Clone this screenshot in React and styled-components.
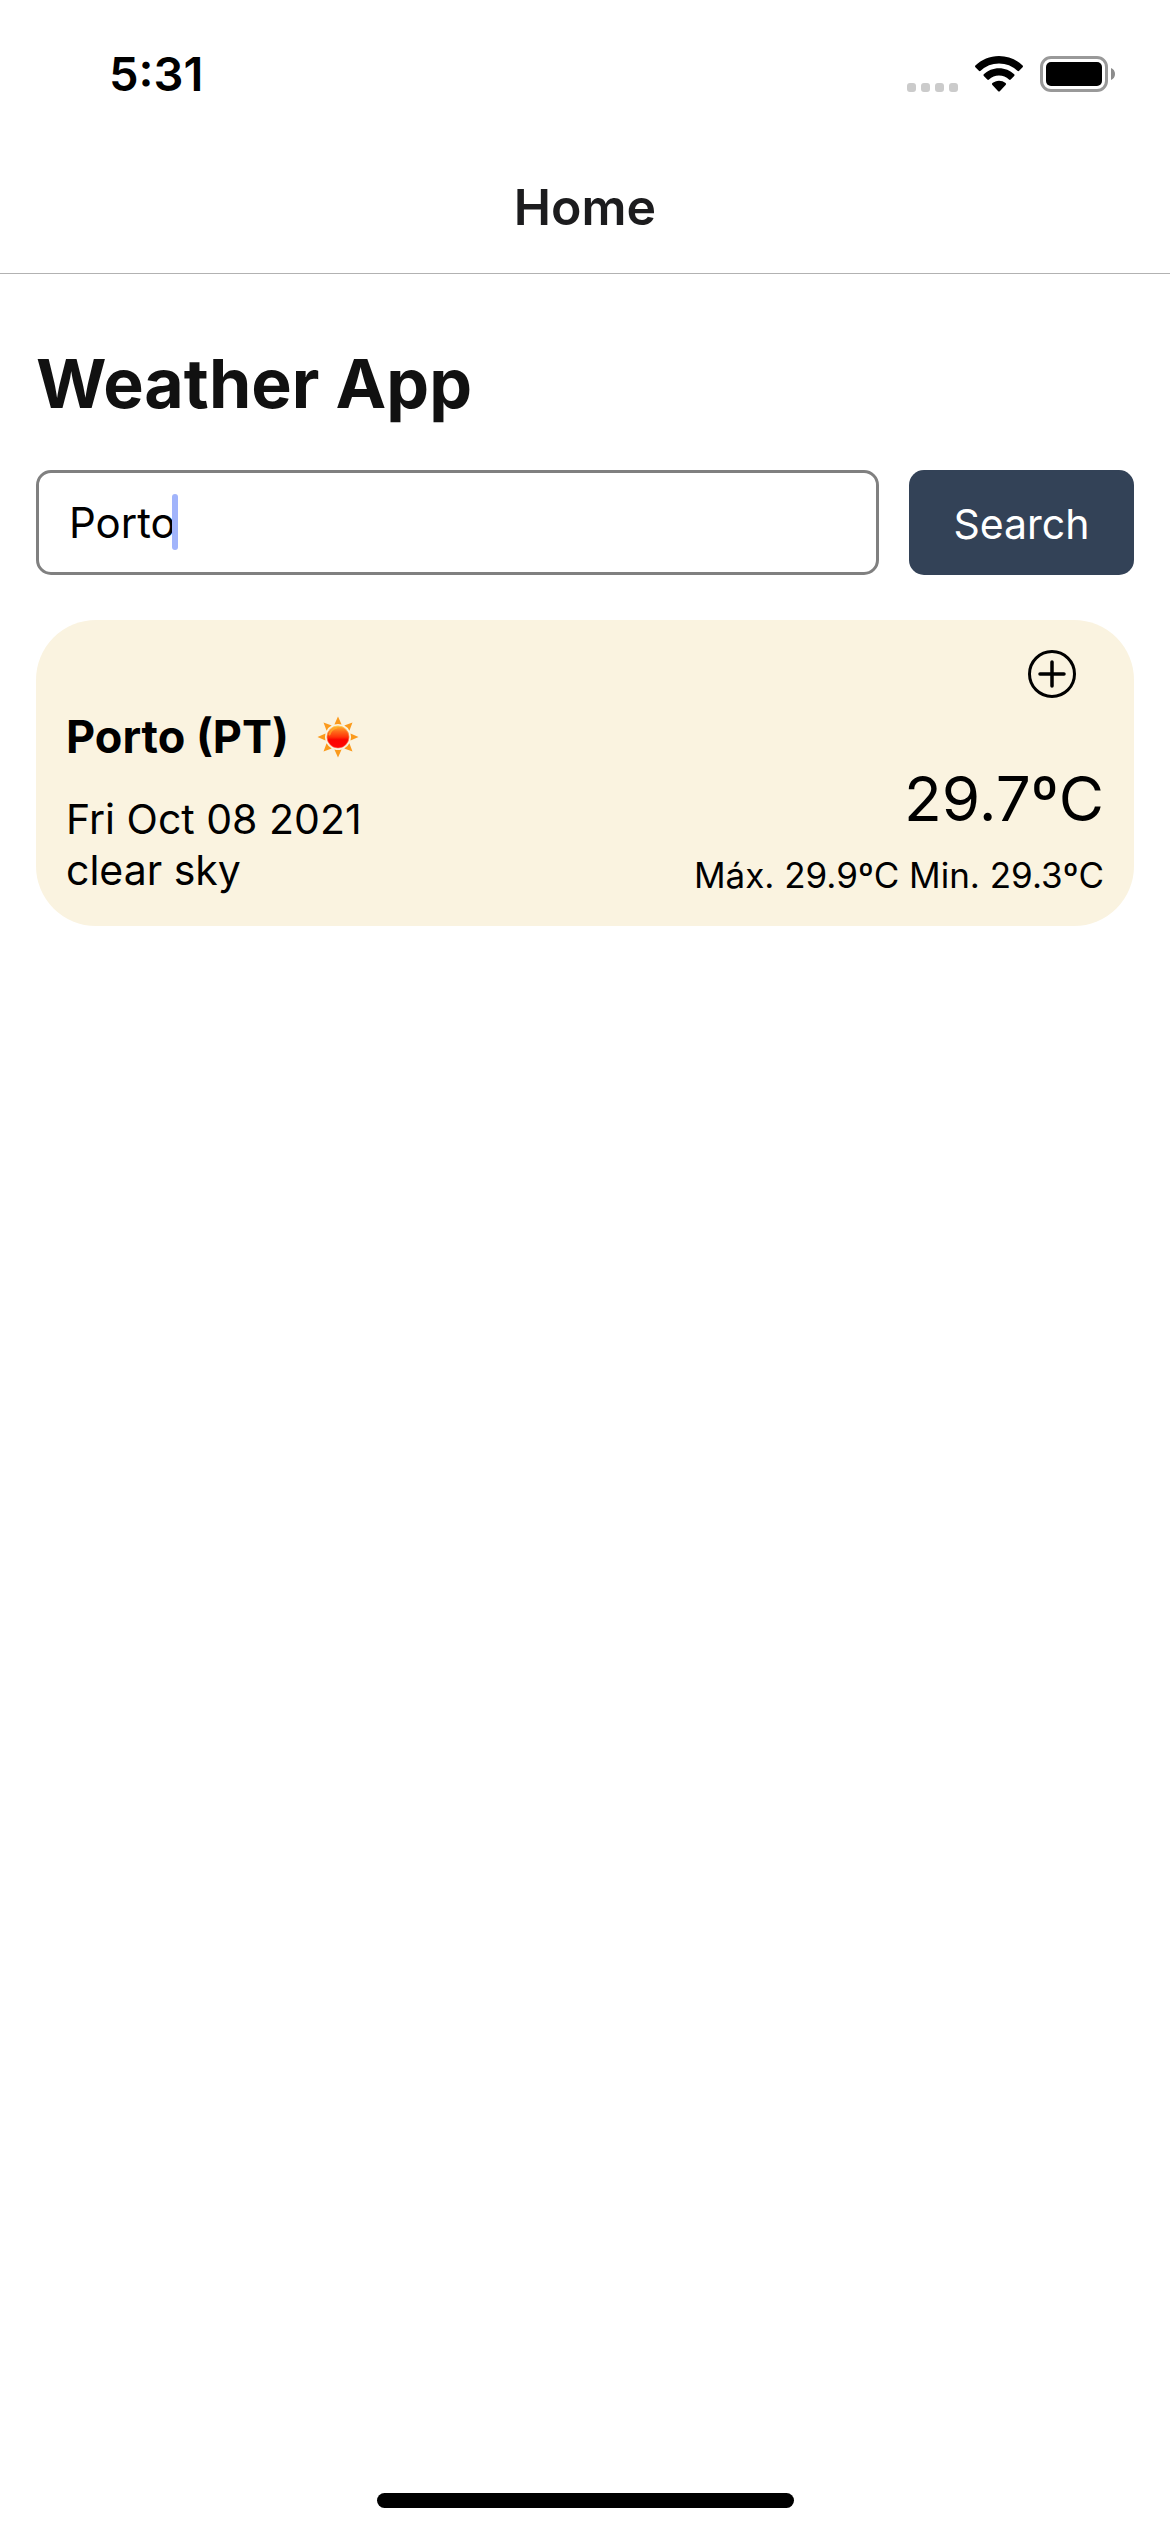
import React, { useState } from "react";
import styled, { createGlobalStyle } from "styled-components";

const GlobalStyle = createGlobalStyle`
  *, *::before, *::after { box-sizing: border-box; }
  body {
    margin: 0;
    background: #fff;
    color: #000;
    font-family: Inter, "Liberation Sans", sans-serif;
  }
`;

const Screen = styled.div`
  display: flex;
  flex-direction: column;
  min-height: 100vh;
`;

const StatusBar = styled.div`
  display: flex;
  align-items: center;
  justify-content: space-between;
  height: 141px;
  padding: 7px 54px 0 109px;
`;

const Time = styled.time`
  font-size: 47px;
  font-weight: 600;
  line-height: 54px;
`;

const StatusIcons = styled.div`
  display: flex;
  align-items: flex-end;
  gap: 17px;
  height: 36px;

  svg { display: block; }
`;

const SignalDots = styled.div`
  display: flex;
  gap: 5px;
`;

const Dot = styled.span`
  width: 9px;
  height: 9px;
  border-radius: 3px;
  background: #cbcbcb;
`;

const NavBar = styled.header`
  display: flex;
  align-items: center;
  justify-content: center;
  height: 133px;
  border-bottom: 1px solid #b2b2b2;
`;

const NavTitle = styled.div`
  color: #1c1c1e;
  font-size: 50px;
  font-weight: 600;
  line-height: 60px;
`;

const Content = styled.main`
  display: flex;
  flex: 1;
  flex-direction: column;
  padding: 66px 36px;
`;

const Title = styled.h1`
  margin: 0 0 44px;
  color: #111;
  font-size: 68px;
  font-weight: 700;
  line-height: 86px;
`;

const SearchForm = styled.form`
  display: flex;
  gap: 30px;
  margin-bottom: 45px;
`;

const Field = styled.div`
  position: relative;
  flex: 1;
`;

const CityInput = styled.input`
  display: block;
  width: 100%;
  height: 105px;
  padding: 0 30px;
  border: 3px solid #808080;
  border-radius: 15px;
  outline: none;
  background: #fff;
  color: #000;
  font: 400 42px/51px Inter, "Liberation Sans", sans-serif;
  caret-color: transparent;
`;

const Caret = styled.span`
  position: absolute;
  top: 24px;
  left: 136px;
  width: 6px;
  height: 56px;
  border-radius: 3px;
  background: #a1b4fb;
`;

const SearchButton = styled.button`
  width: 225px;
  height: 105px;
  padding: 4px 0 0;
  border: 0;
  border-radius: 15px;
  background: #334257;
  color: #fff;
  font: 400 41px/51px Inter, "Liberation Sans", sans-serif;
`;

const Card = styled.article`
  padding: 30px;
  border-radius: 60px;
  background: #faf3e0;
`;

const CardActions = styled.div`
  display: flex;
  justify-content: flex-end;
  padding-right: 28px;
  margin-bottom: 12px;
`;

const IconButton = styled.button`
  padding: 0;
  border: 0;
  background: none;
  color: #000;

  svg { display: block; }
`;

const CardBody = styled.div`
  display: flex;
  align-items: flex-end;
  justify-content: space-between;
`;

const CityRow = styled.div`
  display: flex;
  align-items: center;
  gap: 28px;
  margin-bottom: 30px;
`;

const City = styled.h2`
  margin: 0;
  font-size: 45px;
  font-weight: 700;
  line-height: 54px;
`;

const Detail = styled.p`
  margin: 0;
  font-size: 41px;
  line-height: 51px;
`;

const Readings = styled.div`
  text-align: right;
`;

const Temperature = styled.p`
  margin: 0 0 16px;
  font-size: 62px;
  line-height: 78px;
`;

const Range = styled.p`
  margin: 0;
  font-size: 35px;
  line-height: 42px;
`;

const Footer = styled.footer`
  display: flex;
  justify-content: center;
  padding-bottom: 24px;
`;

const HomeIndicator = styled.div`
  width: 417px;
  height: 15px;
  border-radius: 8px;
  background: #000;
`;

function WifiIcon() {
  return (
    <svg width="48" height="36" viewBox="0 0 48 36" aria-hidden="true">
      <path d="M24 0C14.8 0 6.500 3.600 .4 9.500a1.200 1.200 0 0 0 0 1.700l3.500 3.600a1.200 1.200 0 0 0 1.700 0A26.500 26.500 0 0 1 24 7.400a26.500 26.500 0 0 1 18.400 7.400 1.200 1.200 0 0 0 1.700 0l3.500-3.600a1.200 1.200 0 0 0 0-1.700C41.500 3.600 33.200 0 24 0Z" />
      <path d="M24 12.300c-5.900 0-11.200 2.300-15.200 6a1.200 1.200 0 0 0 0 1.700l3.500 3.600a1.200 1.200 0 0 0 1.700 0 14.500 14.500 0 0 1 20 0 1.200 1.200 0 0 0 1.700 0l3.500-3.600a1.200 1.200 0 0 0 0-1.700c-4-3.700-9.300-6-15.200-6Z" />
      <path d="M24 24.700c-2.500 0-4.800.9-6.600 2.400a1.200 1.200 0 0 0 0 1.800l5.800 6.300a1.200 1.200 0 0 0 1.600 0l5.800-6.300a1.200 1.200 0 0 0 0-1.800 10.300 10.300 0 0 0-6.600-2.400Z" />
    </svg>
  );
}

function BatteryIcon() {
  return (
    <svg width="76" height="36" viewBox="0 0 76 36" aria-hidden="true">
      <rect x="1.500" y="1.500" width="65" height="33" rx="9.500" fill="none" stroke="#999" strokeWidth="3" />
      <rect x="6" y="6" width="56" height="24" rx="5" />
      <path d="M71 12c2.500 1 4 3.200 4 6s-1.500 5-4 6Z" fill="#8c8c8c" />
    </svg>
  );
}

function AddIcon() {
  return (
    <svg width="48" height="48" viewBox="0 0 48 48" fill="none" stroke="currentColor" strokeWidth="3" strokeLinecap="round" aria-hidden="true">
      <circle cx="24" cy="24" r="22.500" />
      <path d="M24 12v24M12 24h24" strokeWidth="3.500" />
    </svg>
  );
}

function SunIcon() {
  const rays = [0, 45, 90, 135, 180, 225, 270, 315];
  return (
    <svg width="42" height="42" viewBox="0 0 42 42" role="img" aria-label="Sunny">
      <defs>
        <linearGradient id="sunFill" x1="0" y1="0" x2="0" y2="1">
          <stop offset="0" stopColor="#ffb52e" />
          <stop offset=".25" stopColor="#ff6a1a" />
          <stop offset=".5" stopColor="#ff3308" />
          <stop offset=".62" stopColor="#fb0500" />
          <stop offset="1" stopColor="#ff0505" />
        </linearGradient>
        <linearGradient id="sunRim" x1="0" y1="0" x2="0" y2="1">
          <stop offset="0" stopColor="#ffcb55" />
          <stop offset=".5" stopColor="#ff7a3a" stopOpacity=".7" />
          <stop offset="1" stopColor="#ff6a4a" stopOpacity=".5" />
        </linearGradient>
      </defs>
      {rays.map((angle) => (
        <path key={angle} d="M21 .5 24.600 8.500Q21 7.300 17.400 8.500Z" fill="#fb9a1c" transform={`rotate(${angle} 21 21)`} />
      ))}
      <circle cx="21" cy="21" r="11" fill="url(#sunFill)" stroke="url(#sunRim)" />
      <path d="M12.500 18.500q1.500-5.500 7-6.700" fill="none" stroke="#ffb02a" strokeWidth="2" strokeLinecap="round" opacity=".7" />
    </svg>
  );
}

export default function App() {
  const [city, setCity] = useState("Porto");

  return (
    <Screen>
      <GlobalStyle />
      <StatusBar>
        <Time>5:31</Time>
        <StatusIcons>
          <SignalDots>
            <Dot />
            <Dot />
            <Dot />
            <Dot />
          </SignalDots>
          <WifiIcon />
          <BatteryIcon />
        </StatusIcons>
      </StatusBar>
      <NavBar>
        <NavTitle>Home</NavTitle>
      </NavBar>
      <Content>
        <Title>Weather App</Title>
        <SearchForm onSubmit={(event) => event.preventDefault()}>
          <Field>
            <CityInput aria-label="City" value={city} onChange={(event) => setCity(event.target.value)} />
            <Caret />
          </Field>
          <SearchButton type="submit">Search</SearchButton>
        </SearchForm>
        <Card>
          <CardActions>
            <IconButton type="button" aria-label="Add city">
              <AddIcon />
            </IconButton>
          </CardActions>
          <CardBody>
            <div>
              <CityRow>
                <City>Porto (PT)</City>
                <SunIcon />
              </CityRow>
              <Detail>Fri Oct 08 2021</Detail>
              <Detail>clear sky</Detail>
            </div>
            <Readings>
              <Temperature>29.7ºC</Temperature>
              <Range>Máx. 29.9ºC Min. 29.3ºC</Range>
            </Readings>
          </CardBody>
        </Card>
      </Content>
      <Footer>
        <HomeIndicator />
      </Footer>
    </Screen>
  );
}
